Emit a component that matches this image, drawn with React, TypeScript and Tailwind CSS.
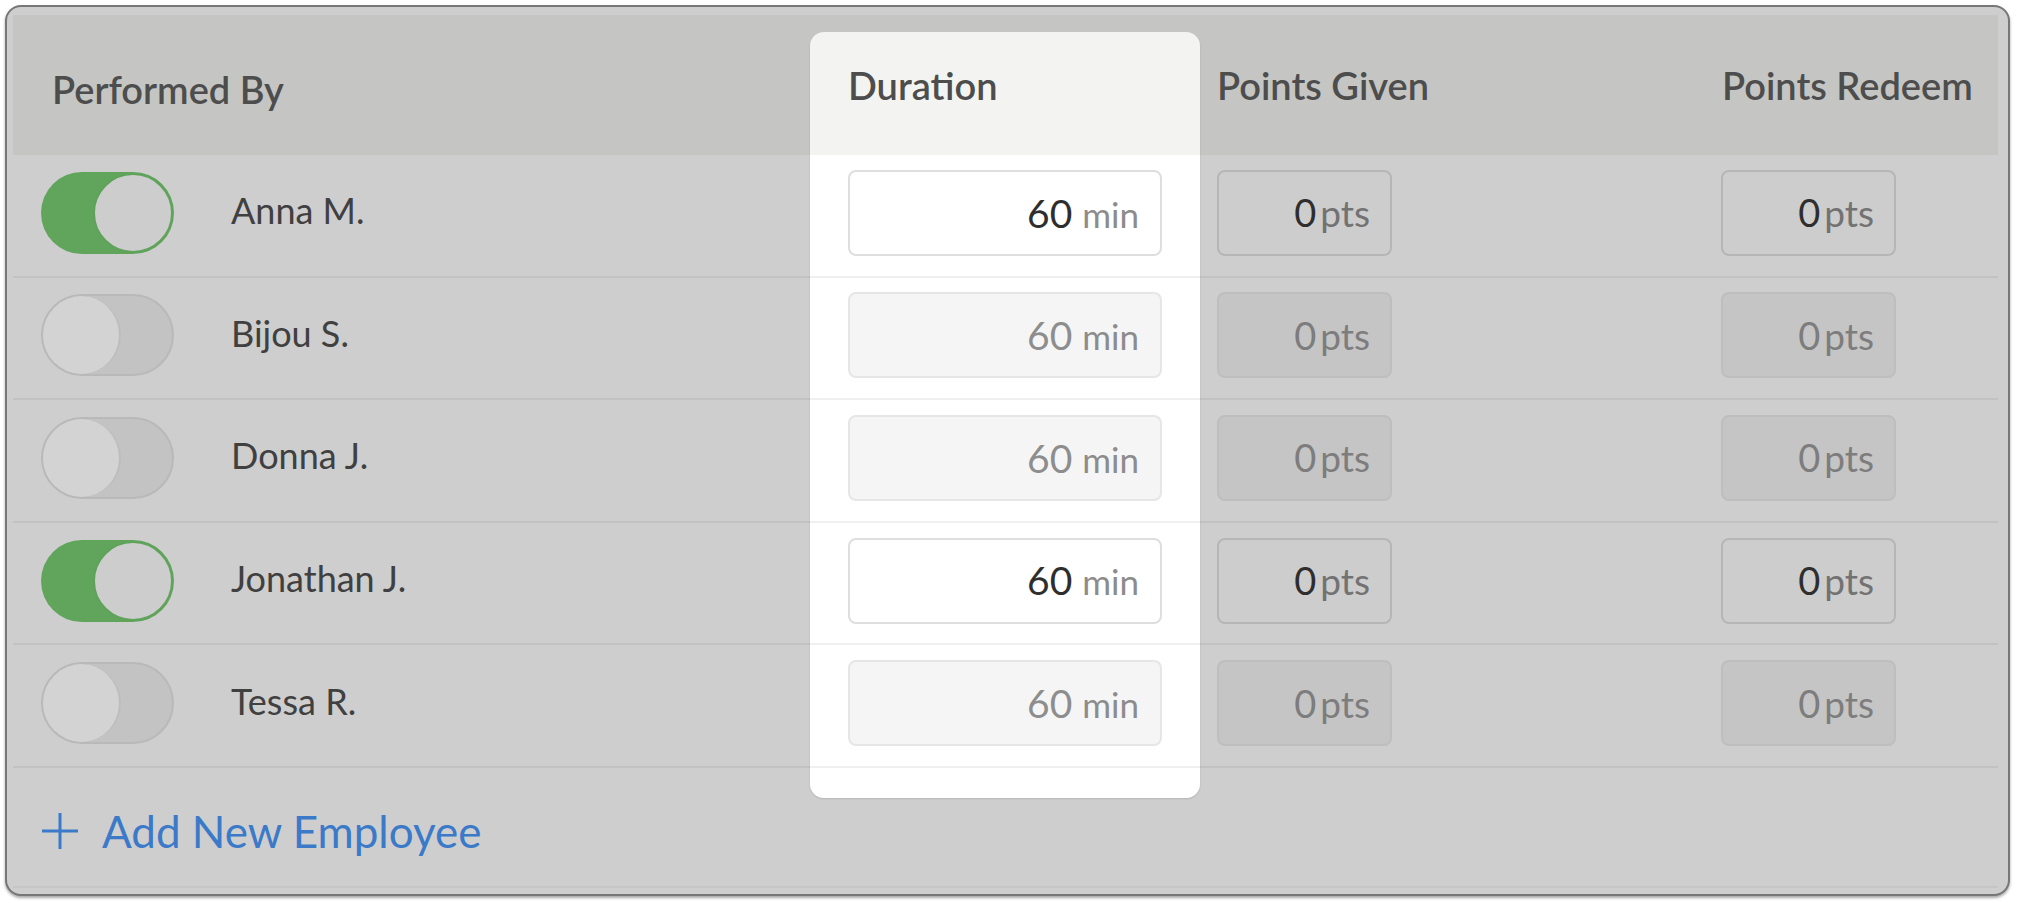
import React from "react";

const people = [
  { name: "Anna M.", on: true },
  { name: "Bijou S.", on: false },
  { name: "Donna J.", on: false },
  { name: "Jonathan J.", on: true },
  { name: "Tessa R.", on: false },
];

function Toggle({ on }: { on: boolean }) {
  if (on) {
    return (
      <div className="w-[133px] h-[82px] rounded-full bg-[#61a55d] flex items-center justify-end p-[1px]">
        <div className="w-[80px] h-[80px] rounded-full bg-[#cdcdcd] border-2 border-[#5fa35b]" />
      </div>
    );
  }
  return (
    <div className="w-[133px] h-[82px] rounded-full bg-[#c3c3c3] border-2 border-[#b9b9b9] flex items-center">
      <div className="w-[78px] h-[78px] rounded-full bg-[#d3d3d3] border-r-2 border-[#bdbdbd]" />
    </div>
  );
}

function DurationBox({ on }: { on: boolean }) {
  return (
    <div
      className={
        on
          ? "w-[314px] h-[86px] rounded-[8px] border-2 border-[#dedede] bg-white flex items-center justify-end pr-[21px]"
          : "w-[314px] h-[86px] rounded-[8px] border-2 border-[#e6e6e6] bg-[#f5f5f5] flex items-center justify-end pr-[21px]"
      }
    >
      <span className="flex items-baseline">
        <span className={on ? "text-[39px] text-[#2e2e2e]" : "text-[39px] text-[#8d8d8d]"}>60</span>
        <span className="ml-[10px] text-[35px] text-[#8c8c8c]">min</span>
      </span>
    </div>
  );
}

function PointsBox({ on }: { on: boolean }) {
  return (
    <div
      className={
        on
          ? "w-[175px] h-[86px] rounded-[8px] border-2 border-[#b6b6b6] bg-[#cdcdcd] flex items-center justify-end pr-[20px]"
          : "w-[175px] h-[86px] rounded-[8px] border-2 border-[#bebebe] bg-[#c5c5c5] flex items-center justify-end pr-[20px]"
      }
    >
      <span className="flex items-baseline">
        <span className={on ? "text-[38px] text-[#2e2e2e]" : "text-[38px] text-[#7d7d7d]"}>0</span>
        <span className={on ? "ml-[4px] text-[37px] text-[#727272]" : "ml-[4px] text-[37px] text-[#7d7d7d]"}>pts</span>
      </span>
    </div>
  );
}

export default function App() {
  return (
    <div className="min-h-screen bg-white pt-[5px] pl-[5px] pr-[7px] pb-[7px] [font-family:Lato,'Liberation_Sans',sans-serif]">
      <div className="rounded-[16px] border-2 border-[#777777] bg-[#cecece] pl-[6px] pr-[10px] pt-[8px] pb-[6px] shadow-[0_2px_3px_rgba(0,0,0,0.35)]">
        <div className="relative isolate">
          {/* spotlight on the Duration column */}
          <div className="absolute left-[797px] top-[17px] w-[390px] h-[766px] rounded-[14px] z-10 bg-[linear-gradient(to_bottom,#f3f4f2_123px,#ffffff_123px)] shadow-[0_1px_2px_rgba(0,0,0,0.12)]" />

          {/* header */}
          <div className="grid grid-cols-[797px_390px_504px_1fr] h-[140px] bg-[#c5c6c3] text-[38px] font-semibold text-[#4d4d4d]">
            <div className="flex items-center pl-[39px] pt-[8px]">Performed By</div>
            <div className="relative z-20 flex items-center pl-[38px]">Duration</div>
            <div className="flex items-center pl-[17px]">Points Given</div>
            <div className="flex items-center pl-[18px]">Points Redeem</div>
          </div>

          {/* rows */}
          {people.map((p) => (
            <div key={p.name} className="grid grid-cols-[797px_390px_504px_1fr] h-[122.6px]">
              <div className="flex items-center pl-[28px] pb-[5px] border-b-2 border-[#c2c2c2]">
                <Toggle on={p.on} />
                <span className="ml-[57px] mb-[5px] text-[36px] text-[#404040]">{p.name}</span>
              </div>
              <div className="relative z-20 flex items-center pl-[38px] pb-[5px] border-b-2 border-[#f0f0f0]">
                <DurationBox on={p.on} />
              </div>
              <div className="flex items-center pl-[17px] pb-[5px] border-b-2 border-[#c2c2c2]">
                <PointsBox on={p.on} />
              </div>
              <div className="flex items-center pl-[17px] pb-[5px] border-b-2 border-[#c2c2c2]">
                <PointsBox on={p.on} />
              </div>
            </div>
          ))}

          {/* footer */}
          <div className="h-[120px] flex items-center pl-[28px] pt-[8px] text-[#3b79c9] border-b-2 border-[#c6c6c6]">
            <svg width="38" height="38" viewBox="0 0 38 38" className="shrink-0">
              <path d="M19 1v36M1 19h36" stroke="currentColor" strokeWidth="3" fill="none" />
            </svg>
            <span className="ml-[23px] text-[44px]">Add New Employee</span>
          </div>
        </div>
      </div>
    </div>
  );
}
